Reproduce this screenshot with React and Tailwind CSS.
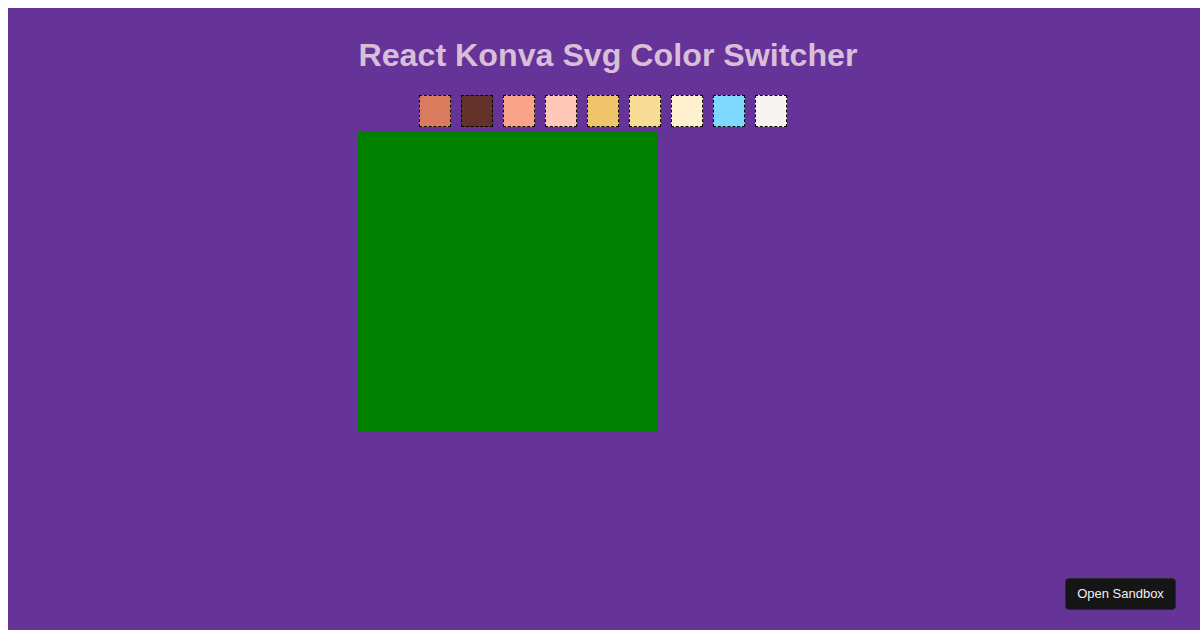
const SWATCHES = [
  '#d97b5d', '#63322b', '#faa48a', '#ffc8b9', '#f0c46a',
  '#f8dc96', '#fff0ce', '#80d8ff', '#f8f4f2',
];

export default function App() {
  return (
    <div className="h-[630px] w-[1200px] overflow-hidden bg-white pl-2 pt-2" style={{ fontFamily: '"Liberation Sans", Arial, sans-serif' }}>
      <div className="flex h-[622px] w-[1200px] flex-col items-center bg-[#663399]">
        <h1 className="mt-[29px] text-[32.2px] font-bold leading-[37px] text-[#d8bfd8]">
          React Konva Svg Color Switcher
        </h1>
        <div className="mt-[21px] flex">
          {SWATCHES.map(c => (
            <div
              key={c}
              className="mr-[10px] h-8 w-8 border border-dashed border-black"
              style={{ backgroundColor: c }}
            />
          ))}
        </div>
        <div className="mt-[4px] h-[300px] w-[500px]">
          <div className="h-[300px] w-[300px] bg-[#008000]" />
        </div>
      </div>
      <button className="fixed bottom-[20px] right-[24px] h-[32px] w-[111px] rounded-[4px] border border-[#2a2a2a] bg-[#151515] text-[13px] text-[#f0f0f0]">
        Open Sandbox
      </button>
    </div>
  );
}
